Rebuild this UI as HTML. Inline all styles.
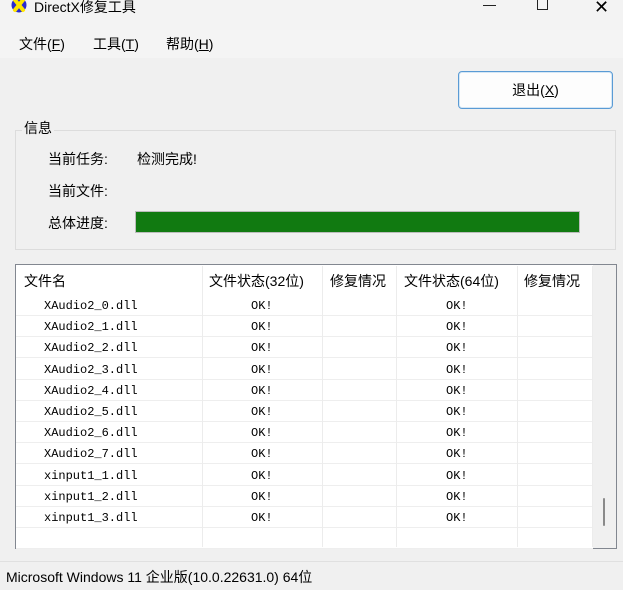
<!DOCTYPE html>
<html><head><meta charset="utf-8"><style>
*{margin:0;padding:0;box-sizing:border-box}
body{width:623px;height:590px;background:#f0f0f0;font-family:"Liberation Sans","Noto Sans CJK SC",sans-serif;font-size:14px;color:#000;position:relative;overflow:hidden}
.a{position:absolute;white-space:nowrap}
.mono{font-family:"Liberation Mono","Noto Sans CJK SC",monospace;font-size:12px}
</style></head><body>
<div class="a" style="left:0;top:0;width:623px;height:30px;background:#f3f3f3"></div>
<svg class="a" style="left:11px;top:-3px" width="16" height="16" viewBox="0 0 16 16"><circle cx="8" cy="8" r="7.5" fill="#2a2ad0"/><path d="M4 3l8 10M12 3L4 13" stroke="#ffe600" stroke-width="4" stroke-linecap="round"/></svg>
<div class="a" style="left:34px;top:-3px;font-size:14px">DirectX修复工具</div>
<div class="a" style="left:483px;top:5px;width:13px;height:1px;background:#222"></div>
<div class="a" style="left:537px;top:-2px;width:11px;height:12px;border:1px solid #222"></div>
<div class="a" style="left:594px;top:-3px;font-size:18px">✕</div>
<div class="a" style="left:0;top:30px;width:623px;height:28px;background:#f4f4f4"></div>
<div class="a" style="left:19px;top:34px">文件(<u>F</u>)</div>
<div class="a" style="left:93px;top:34px">工具(<u>T</u>)</div>
<div class="a" style="left:166px;top:34px">帮助(<u>H</u>)</div>
<div class="a" style="left:458px;top:71px;width:155px;height:38px;background:#fdfdfd;border:1px solid #5a9bd5;border-radius:4px;box-shadow:inset 0 0 0 1px #d6e7f5;text-align:center;line-height:36px;font-size:14px">退出(<u>X</u>)</div>
<div class="a" style="left:15px;top:130px;width:601px;height:120px;border:1px solid #dcdcdc"></div>
<div class="a" style="left:22px;top:118px;background:#f0f0f0;padding:0 2px">信息</div>
<div class="a" style="left:48px;top:149px">当前任务:</div>
<div class="a" style="left:137px;top:149px">检测完成!</div>
<div class="a" style="left:48px;top:181px">当前文件:</div>
<div class="a" style="left:48px;top:213px">总体进度:</div>
<div class="a" style="left:135px;top:211px;width:445px;height:22px;background:#117a11;border:1px solid #bcbcbc"></div>
<div class="a" style="left:15px;top:264px;width:602px;height:285px;background:#fff;border:1px solid #828790"></div>
<div class="a" style="left:593px;top:265px;width:23px;height:283px;background:#f0f0f0"></div>
<div class="a" style="left:603px;top:498px;width:2px;height:28px;background:#8a8a8a;border-radius:1px"></div>
<div class="a" style="left:16px;top:265px;width:577px;height:30px;background:#fff"></div>
<div class="a" style="left:24px;top:271px">文件名</div>
<div class="a" style="left:209px;top:271px">文件状态(32位)</div>
<div class="a" style="left:330px;top:271px">修复情况</div>
<div class="a" style="left:404px;top:271px">文件状态(64位)</div>
<div class="a" style="left:524px;top:271px">修复情况</div>
<div id="rows"></div>
<div class="a" style="left:202px;top:266px;width:1px;height:281px;background:#ececec"></div>
<div class="a" style="left:322px;top:266px;width:1px;height:281px;background:#ececec"></div>
<div class="a" style="left:396px;top:266px;width:1px;height:281px;background:#ececec"></div>
<div class="a" style="left:517px;top:266px;width:1px;height:281px;background:#ececec"></div>
<div class="a" style="left:592px;top:266px;width:1px;height:281px;background:#ececec"></div>
<script>
var n=["XAudio2_0.dll","XAudio2_1.dll","XAudio2_2.dll","XAudio2_3.dll","XAudio2_4.dll","XAudio2_5.dll","XAudio2_6.dll","XAudio2_7.dll","xinput1_1.dll","xinput1_2.dll","xinput1_3.dll"];
var h="";
for(var i=0;i<12;i++){var t=295+i*21.2;
h+='<div class="a" style="left:16px;top:'+(t+20)+'px;width:577px;height:1px;background:#eeeeee"></div>';
if(i<11){h+='<div class="a mono" style="left:44px;top:'+(t+4)+'px">'+n[i]+'</div><div class="a mono" style="left:251px;top:'+(t+4)+'px">OK!</div><div class="a mono" style="left:446px;top:'+(t+4)+'px">OK!</div>';}}
document.getElementById("rows").outerHTML=h;
</script>
<div class="a" style="left:0;top:561px;width:623px;height:29px;background:#f0f0f0;border-top:1px solid #e0e0e0"></div>
<div class="a" style="left:6px;top:567px;font-size:14px">Microsoft Windows 11 企业版(10.0.22631.0) 64位</div>
</body></html>
